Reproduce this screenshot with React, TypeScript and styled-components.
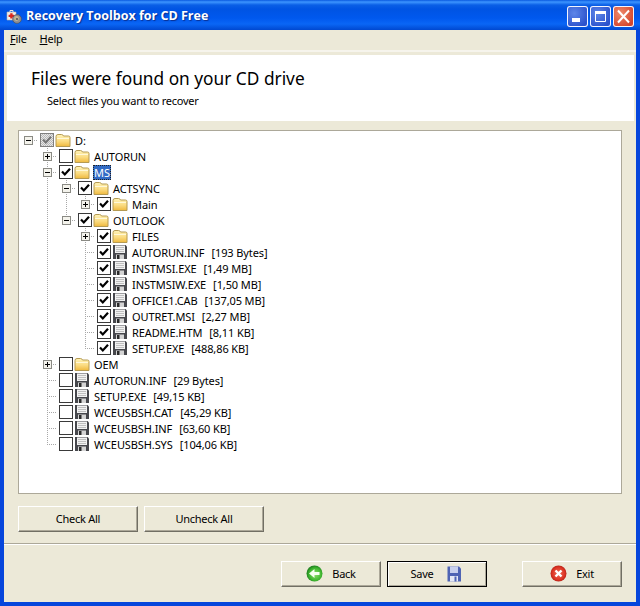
import React from 'react'
import styled, { createGlobalStyle } from 'styled-components'

const UI_FONT = '"Noto Sans", "Open Sans", "Liberation Sans", sans-serif'

type Row = {
  guides: boolean[]
  toggle?: 'plus' | 'minus'
  stem?: 'root' | 'mid' | 'last'
  check: 'on' | 'off' | 'mixed'
  icon: 'folder' | 'file'
  label: string
  size?: string
  selected?: boolean
}

const rows: Row[] = [
  { guides: [], toggle: 'minus', stem: 'root', check: 'mixed', icon: 'folder', label: 'D:' },
  { guides: [false], toggle: 'plus', stem: 'mid', check: 'off', icon: 'folder', label: 'AUTORUN' },
  { guides: [false], toggle: 'minus', stem: 'mid', check: 'on', icon: 'folder', label: 'MS', selected: true },
  { guides: [false, true], toggle: 'minus', stem: 'mid', check: 'on', icon: 'folder', label: 'ACTSYNC' },
  { guides: [false, true, true], toggle: 'plus', stem: 'last', check: 'on', icon: 'folder', label: 'Main' },
  { guides: [false, true], toggle: 'minus', stem: 'last', check: 'on', icon: 'folder', label: 'OUTLOOK' },
  { guides: [false, true, false], toggle: 'plus', stem: 'mid', check: 'on', icon: 'folder', label: 'FILES' },
  { guides: [false, true, false], stem: 'mid', check: 'on', icon: 'file', label: 'AUTORUN.INF', size: '[193 Bytes]' },
  { guides: [false, true, false], stem: 'mid', check: 'on', icon: 'file', label: 'INSTMSI.EXE', size: '[1,49 MB]' },
  { guides: [false, true, false], stem: 'mid', check: 'on', icon: 'file', label: 'INSTMSIW.EXE', size: '[1,50 MB]' },
  { guides: [false, true, false], stem: 'mid', check: 'on', icon: 'file', label: 'OFFICE1.CAB', size: '[137,05 MB]' },
  { guides: [false, true, false], stem: 'mid', check: 'on', icon: 'file', label: 'OUTRET.MSI', size: '[2,27 MB]' },
  { guides: [false, true, false], stem: 'mid', check: 'on', icon: 'file', label: 'README.HTM', size: '[8,11 KB]' },
  { guides: [false, true, false], stem: 'last', check: 'on', icon: 'file', label: 'SETUP.EXE', size: '[488,86 KB]' },
  { guides: [false], toggle: 'plus', stem: 'mid', check: 'off', icon: 'folder', label: 'OEM' },
  { guides: [false], stem: 'mid', check: 'off', icon: 'file', label: 'AUTORUN.INF', size: '[29 Bytes]' },
  { guides: [false], stem: 'mid', check: 'off', icon: 'file', label: 'SETUP.EXE', size: '[49,15 KB]' },
  { guides: [false], stem: 'mid', check: 'off', icon: 'file', label: 'WCEUSBSH.CAT', size: '[45,29 KB]' },
  { guides: [false], stem: 'mid', check: 'off', icon: 'file', label: 'WCEUSBSH.INF', size: '[63,60 KB]' },
  { guides: [false], stem: 'last', check: 'off', icon: 'file', label: 'WCEUSBSH.SYS', size: '[104,06 KB]' },
]

const AppIcon = () => (
  <svg width="16" height="16" viewBox="0 0 16 16">
    <path d="M1 4h9v8H1z" fill="#f4f0ea" stroke="#b9b2a8" strokeWidth="0.6" />
    <path d="M4 4V2.5h3V4" fill="none" stroke="#e8e4dc" />
    <path d="M4.2 5.2h2.4v1.6h1.6v2.2H6.6v1.6H4.2V9H2.6V6.8h1.6z" fill="#d8281e" />
    <circle cx="11" cy="11" r="4.4" fill="#8f8f96" stroke="#4d4d50" strokeWidth="0.6" />
    <circle cx="10.5" cy="10.5" r="2.4" fill="#c4b890" />
    <circle cx="11" cy="11" r="1.1" fill="#55555a" />
  </svg>
)

const FolderIcon = () => (
  <svg width="16" height="16" viewBox="0 0 16 16">
    <defs>
      <linearGradient id="folderFill" x1="0" y1="0" x2="0" y2="1">
        <stop offset="0" stopColor="#fff3b8" />
        <stop offset="0.55" stopColor="#fbdc82" />
        <stop offset="1" stopColor="#efb93e" />
      </linearGradient>
    </defs>
    <path
      d="M1 14.5V4.5Q1 2.5 3 2.5h3.5Q8 2.5 8.5 4h5q1.5 0 1.5 1.5v9z"
      fill="url(#folderFill)"
      stroke="#b59a52"
    />
    <path d="M2 6.5h12" stroke="#fff8d8" />
  </svg>
)

const FloppyIcon = () => (
  <svg width="16" height="16" viewBox="0 0 16 16">
    <path d="M1 1h12.5L15 2.5V15H1z" fill="#46474c" />
    <path d="M3 1.5h10V9H3z" fill="#f2f2f2" />
    <path d="M4 3.5h8M4 5.5h8M4 7.5h8" stroke="#c0c0c0" />
    <path d="M4 10.5h8V15H4z" fill="#d4d4d4" />
    <path d="M5 11h2.5v4H5z" fill="#2a2a2a" />
  </svg>
)

const BackIcon = () => (
  <svg width="17" height="17" viewBox="0 0 17 17">
    <defs>
      <radialGradient id="backBall" cx="0.55" cy="0.55" r="0.6">
        <stop offset="0" stopColor="#8fe06c" />
        <stop offset="0.65" stopColor="#3eb52f" />
        <stop offset="1" stopColor="#15701a" />
      </radialGradient>
    </defs>
    <circle cx="8.5" cy="8.5" r="8" fill="url(#backBall)" />
    <path d="M3 8.5 8.5 4v3h5v3h-5v3z" fill="#f6fff0" />
  </svg>
)

const ExitIcon = () => (
  <svg width="17" height="17" viewBox="0 0 17 17">
    <defs>
      <radialGradient id="exitBall" cx="0.5" cy="0.5" r="0.6">
        <stop offset="0" stopColor="#f0705a" />
        <stop offset="0.65" stopColor="#dc3424" />
        <stop offset="1" stopColor="#9c1510" />
      </radialGradient>
    </defs>
    <circle cx="8.5" cy="8.5" r="8" fill="url(#exitBall)" />
    <path d="M5.5 5.5l6 6M11.5 5.5l-6 6" stroke="#fff" strokeWidth="2.4" />
  </svg>
)

const SaveIcon = () => (
  <svg width="14" height="16" viewBox="0 0 14 16">
    <path d="M0.5 0.5h11.5L14 2.5V15.5H0.5z" fill="#4f64b4" />
    <path d="M3 0.5h8V7H3z" fill="#c9d1ee" />
    <path d="M3 10h8v5.5H3z" fill="#e6e9f5" />
    <path d="M7.5 10.5h2v5h-2z" fill="#4f64b4" />
  </svg>
)

const App = () => (
  <>
    <GlobalStyle />
    <Window>
      <TitleBar>
        <AppIcon />
        <TitleText>Recovery Toolbox for CD Free</TitleText>
        <CaptionButtons>
          <CaptionButton>
            <svg width="21" height="21" viewBox="0 0 21 21">
              <path d="M5 12h8v4H5z" fill="#fff" />
            </svg>
          </CaptionButton>
          <CaptionButton>
            <svg width="21" height="21" viewBox="0 0 21 21">
              <path d="M5.5 5.5h10v10h-10z" fill="none" stroke="#fff" />
              <path d="M5 5h11v3H5z" fill="#fff" />
            </svg>
          </CaptionButton>
          <CaptionButton $close>
            <svg width="21" height="21" viewBox="0 0 21 21">
              <path d="M5 4.5l11 12M16 4.5l-11 12" stroke="#fff" strokeWidth="2" />
            </svg>
          </CaptionButton>
        </CaptionButtons>
      </TitleBar>
      <Client>
        <MenuBar>
          <MenuItem><u>F</u>ile</MenuItem>
          <MenuItem><u>H</u>elp</MenuItem>
        </MenuBar>
        <MenuEdge />
        <Header>
          <HeaderTitle>Files were found on your CD drive</HeaderTitle>
          <HeaderHint>Select files you want to recover</HeaderHint>
        </Header>
        <TreeBox>
          {rows.map((row, i) => (
            <TreeRow key={i}>
              {row.guides.map((on, j) => (
                <Guide key={j} $on={on} />
              ))}
              <Stem $kind={row.stem ?? 'mid'}>
                {row.toggle && <Toggle>{row.toggle === 'plus' ? <PlusMark /> : <MinusMark />}</Toggle>}
              </Stem>
              <Check $state={row.check}>
                {row.check !== 'off' && (
                  <svg width="12" height="12" viewBox="0 0 12 12">
                    <path d="M2 5.5l2.8 3L10 2.8" fill="none" stroke={row.check === 'on' ? '#000' : '#777'} strokeWidth="2.2" />
                  </svg>
                )}
              </Check>
              <IconSlot>{row.icon === 'folder' ? <FolderIcon /> : <FloppyIcon />}</IconSlot>
              <Label $selected={row.selected}>
                {row.label}
                {row.size && <SizeText>{row.size}</SizeText>}
              </Label>
            </TreeRow>
          ))}
        </TreeBox>
        <ActionRow>
          <Button>Check All</Button>
          <Button>Uncheck All</Button>
        </ActionRow>
        <Divider />
        <Footer>
          <Button $wide>
            <BackIcon />
            Back
          </Button>
          <SaveButton $wide $active>
            Save
            <SaveIcon />
          </SaveButton>
          <ExitSlot>
            <Button $wide>
              <ExitIcon />
              Exit
            </Button>
          </ExitSlot>
        </Footer>
      </Client>
    </Window>
  </>
)

const GlobalStyle = createGlobalStyle`
  html, body {
    margin: 0;
    padding: 0;
    background: #0a4fd8;
  }
`

const Window = styled.div`
  width: 640px;
  height: 606px;
  display: flex;
  flex-direction: column;
  background: #0646dc;
  font-family: ${UI_FONT};
  font-size: 11px;
  letter-spacing: -0.25px;
  color: #000;
  overflow: hidden;
`

const TitleBar = styled.div`
  height: 30px;
  flex: none;
  display: flex;
  align-items: center;
  padding: 2px 6px 0 6px;
  box-sizing: border-box;
  background: linear-gradient(#0a5ae0 0, #3d95ff 2px, #0a5fe6 5px, #0054e3 9px, #0058ee 18px, #0a66f5 24px, #0048d0 30px);
`

const TitleText = styled.div`
  margin: 0 0 2px 4px;
  color: #fff;
  font-family: "Open Sans", "Liberation Sans", sans-serif;
  font-weight: 700;
  font-size: 12.5px;
  letter-spacing: 0;
  text-shadow: 1px 1px 1px #0a2f90;
`

const CaptionButtons = styled.div`
  margin-left: auto;
  display: flex;
  gap: 2px;
`

const CaptionButton = styled.div<{ $close?: boolean }>`
  width: 21px;
  height: 21px;
  border-radius: 3px;
  box-shadow: inset 0 0 0 1px #f2f5ff;
  background: ${({ $close }) =>
    $close
      ? 'radial-gradient(circle at 35% 35%, #ee8a6c, #d4452c 75%)'
      : 'radial-gradient(circle at 35% 35%, #5e86e8, #2b52cc 75%)'};
  svg {
    display: block;
  }
`

const Client = styled.div`
  flex: 1;
  min-height: 0;
  margin: 0 4px 4px;
  display: flex;
  flex-direction: column;
  background: #ece9d8;
`

const MenuBar = styled.div`
  height: 20px;
  flex: none;
  display: flex;
  align-items: center;
  gap: 13px;
  padding: 0 0 4px 6px;
  box-sizing: border-box;
`

const MenuItem = styled.span``

const MenuEdge = styled.div`
  height: 2px;
  flex: none;
  background: #f6f4ec;
`

const Header = styled.div`
  height: 66px;
  flex: none;
  margin: 3px 2px 0 3px;
  box-sizing: border-box;
  padding: 12px 0 0 24px;
  background: #fff;
`

const HeaderTitle = styled.div`
  font-size: 17.3px;
  letter-spacing: 0;
  line-height: 23px;
`

const HeaderHint = styled.div`
  margin: 3px 0 0 16px;
  line-height: 15px;
`

const TreeBox = styled.div`
  height: 364px;
  flex: none;
  margin: 9px 14px 0;
  padding-top: 1px;
  box-sizing: border-box;
  background: #fff;
  border: 1px solid #aca899;
`

const TreeRow = styled.div`
  height: 16px;
  display: flex;
  align-items: center;
`

const dottedV = 'repeating-linear-gradient(#a8a8a8 0 1px, transparent 1px 2px)'

const Guide = styled.div<{ $on: boolean }>`
  width: 19px;
  height: 16px;
  flex: none;
  background: ${({ $on }) => ($on ? `${dottedV} 9px 0 / 1px 100% no-repeat` : 'none')};
`

const stemLine: Record<string, string> = {
  root: 'none',
  mid: `${dottedV} 9px 0 / 1px 100% no-repeat`,
  last: `${dottedV} 9px 0 / 1px 8px no-repeat`,
}

const Stem = styled.div<{ $kind: string }>`
  width: 19px;
  height: 16px;
  flex: none;
  display: flex;
  align-items: center;
  box-sizing: border-box;
  padding-left: 5px;
  background:
    repeating-linear-gradient(90deg, #a8a8a8 0 1px, transparent 1px 2px) 9px 8px / 10px 1px no-repeat,
    ${({ $kind }) => stemLine[$kind]};
`

const Toggle = styled.div`
  width: 9px;
  height: 9px;
  box-sizing: border-box;
  border: 1px solid #8a8a84;
  background: #f4f3ec;
  position: relative;
`

const MinusMark = styled.div`
  position: absolute;
  left: 1px;
  top: 3px;
  width: 5px;
  height: 1px;
  background: #000;
`

const PlusMark = styled(MinusMark)`
  &::after {
    content: '';
    position: absolute;
    left: 2px;
    top: -2px;
    width: 1px;
    height: 5px;
    background: #000;
  }
`

const Check = styled.div<{ $state: string }>`
  width: 14px;
  height: 14px;
  flex: none;
  margin-left: 2px;
  box-sizing: border-box;
  border: 1px solid ${({ $state }) => ($state === 'mixed' ? '#808080' : '#3a3a3a')};
  background: ${({ $state }) =>
    $state === 'mixed' ? 'repeating-conic-gradient(#b8b8b8 0 25%, #e8e8e8 0 50%) 0 0 / 2px 2px' : '#fff'};
  display: flex;
  align-items: center;
  justify-content: center;
`

const IconSlot = styled.div`
  width: 16px;
  height: 16px;
  flex: none;
  margin-left: 1px;
  svg {
    display: block;
  }
`

const Label = styled.div<{ $selected?: boolean }>`
  margin-left: 3px;
  padding: 0 1px;
  white-space: nowrap;
  letter-spacing: -0.1px;
  line-height: 15px;
  background: ${({ $selected }) => ($selected ? '#316ac5' : 'transparent')};
  color: ${({ $selected }) => ($selected ? '#fff' : '#000')};
  outline: ${({ $selected }) => ($selected ? '1px dotted #222' : 'none')};
  outline-offset: -1px;
`

const SizeText = styled.span`
  margin-left: 7px;
`

const ActionRow = styled.div`
  display: flex;
  gap: 6px;
  flex: none;
  margin: 12px 14px 0;
`

const Button = styled.div<{ $wide?: boolean; $active?: boolean }>`
  width: ${({ $wide }) => ($wide ? 100 : 120)}px;
  height: 26px;
  box-sizing: border-box;
  display: flex;
  align-items: center;
  justify-content: center;
  gap: 9px;
  padding-bottom: 1px;
  background: #ece9d8;
  ${({ $active }) =>
    $active
      ? 'border: 1px solid #000; box-shadow: inset 1px 1px 0 #fff, inset -1px -1px 0 #aca899;'
      : 'border-top: 1px solid #fff; border-left: 1px solid #fff; border-right: 1px solid #716f64; border-bottom: 1px solid #716f64; box-shadow: inset -1px -1px 0 #aca899;'}
`

const SaveButton = styled(Button)`
  gap: 13px;
  padding-right: 3px;
`

const Divider = styled.div`
  height: 2px;
  flex: none;
  margin-top: 11px;
  background: linear-gradient(#aca899 1px, #fff 1px);
`

const Footer = styled.div`
  display: flex;
  gap: 6px;
  flex: none;
  margin-top: 16px;
  padding-left: 277px;
`

const ExitSlot = styled.div`
  margin-left: 29px;
`

export default App
